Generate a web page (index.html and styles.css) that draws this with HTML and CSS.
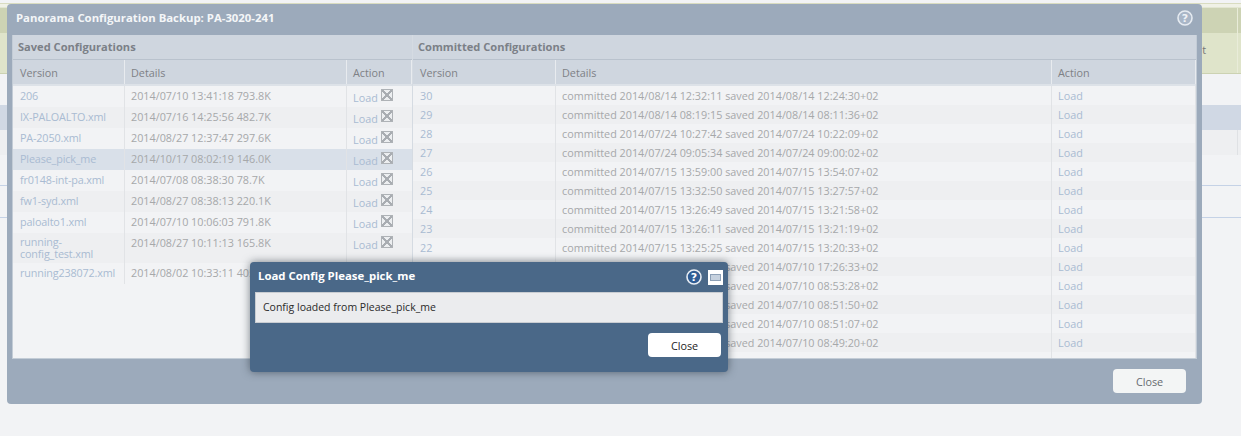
FILE: index.html
```html
<!DOCTYPE html>
<html lang="en">
<head>
<meta charset="utf-8">
<title>Panorama Configuration Backup</title>
<link rel="stylesheet" href="styles.css">
</head>
<body>
<div class="page">
  <div class="bg-top"></div>
  <div class="bg-head"><span class="bg-head-text">t</span></div>
  <div class="bg-gap"></div>
  <div class="bg-sel"></div>
  <div class="bg-alt"></div>
  <div class="bg-line1"></div>
  <div class="bg-line2"></div>
</div>

<section class="backup">
  <header class="backup-title">
    <h1>Panorama Configuration Backup: PA-3020-241</h1>
    <svg class="help" viewBox="0 0 16 16"><circle cx="8" cy="8" r="7" fill="#a9b6c7" stroke="#e6ebf1" stroke-width="1.6"/><text x="8" y="11.6" text-anchor="middle" class="help-q help-q-dim">?</text></svg>
  </header>
  <div class="panel">
    <div class="col saved">
      <div class="section">Saved Configurations</div>
      <div class="row head"><div class="c c1">Version</div><div class="c c2">Details</div><div class="c c3">Action</div></div>
      <div class="row"><div class="c c1 link">206</div><div class="c c2">2014/07/10 13:41:18 793.8K</div><div class="c c3"><span class="link load">Load</span><span class="x"></span></div></div>
      <div class="row alt"><div class="c c1 link">IX-PALOALTO.xml</div><div class="c c2">2014/07/16 14:25:56 482.7K</div><div class="c c3"><span class="link load">Load</span><span class="x"></span></div></div>
      <div class="row"><div class="c c1 link">PA-2050.xml</div><div class="c c2">2014/08/27 12:37:47 297.6K</div><div class="c c3"><span class="link load">Load</span><span class="x"></span></div></div>
      <div class="row picked"><div class="c c1 link">Please_pick_me</div><div class="c c2">2014/10/17 08:02:19 146.0K</div><div class="c c3"><span class="link load">Load</span><span class="x"></span></div></div>
      <div class="row"><div class="c c1 link">fr0148-int-pa.xml</div><div class="c c2">2014/07/08 08:38:30 78.7K</div><div class="c c3"><span class="link load">Load</span><span class="x"></span></div></div>
      <div class="row alt"><div class="c c1 link">fw1-syd.xml</div><div class="c c2">2014/08/27 08:38:13 220.1K</div><div class="c c3"><span class="link load">Load</span><span class="x"></span></div></div>
      <div class="row"><div class="c c1 link">paloalto1.xml</div><div class="c c2">2014/07/10 10:06:03 791.8K</div><div class="c c3"><span class="link load">Load</span><span class="x"></span></div></div>
      <div class="row alt tall"><div class="c c1 link">running-<br>config_test.xml</div><div class="c c2">2014/08/27 10:11:13 165.8K</div><div class="c c3"><span class="link load">Load</span><span class="x"></span></div></div>
      <div class="row"><div class="c c1 link">running238072.xml</div><div class="c c2">2014/08/02 10:33:11 405.2K</div><div class="c c3"><span class="link load">Load</span><span class="x"></span></div></div>
    </div>
    <div class="col committed">
      <div class="section">Committed Configurations</div>
      <div class="row head"><div class="c d1">Version</div><div class="c d2">Details</div><div class="c d3">Action</div></div>
      <div class="row r"><div class="c d1 link">30</div><div class="c d2">committed 2014/08/14 12:32:11 saved 2014/08/14 12:24:30+02</div><div class="c d3 link">Load</div></div>
      <div class="row r alt"><div class="c d1 link">29</div><div class="c d2">committed 2014/08/14 08:19:15 saved 2014/08/14 08:11:36+02</div><div class="c d3 link">Load</div></div>
      <div class="row r"><div class="c d1 link">28</div><div class="c d2">committed 2014/07/24 10:27:42 saved 2014/07/24 10:22:09+02</div><div class="c d3 link">Load</div></div>
      <div class="row r alt"><div class="c d1 link">27</div><div class="c d2">committed 2014/07/24 09:05:34 saved 2014/07/24 09:00:02+02</div><div class="c d3 link">Load</div></div>
      <div class="row r"><div class="c d1 link">26</div><div class="c d2">committed 2014/07/15 13:59:00 saved 2014/07/15 13:54:07+02</div><div class="c d3 link">Load</div></div>
      <div class="row r alt"><div class="c d1 link">25</div><div class="c d2">committed 2014/07/15 13:32:50 saved 2014/07/15 13:27:57+02</div><div class="c d3 link">Load</div></div>
      <div class="row r"><div class="c d1 link">24</div><div class="c d2">committed 2014/07/15 13:26:49 saved 2014/07/15 13:21:58+02</div><div class="c d3 link">Load</div></div>
      <div class="row r alt"><div class="c d1 link">23</div><div class="c d2">committed 2014/07/15 13:26:11 saved 2014/07/15 13:21:19+02</div><div class="c d3 link">Load</div></div>
      <div class="row r"><div class="c d1 link">22</div><div class="c d2">committed 2014/07/15 13:25:25 saved 2014/07/15 13:20:33+02</div><div class="c d3 link">Load</div></div>
      <div class="row r alt"><div class="c d1 link">21</div><div class="c d2">committed 2014/07/10 17:31:20 saved 2014/07/10 17:26:33+02</div><div class="c d3 link">Load</div></div>
      <div class="row r"><div class="c d1 link">20</div><div class="c d2">committed 2014/07/10 08:58:11 saved 2014/07/10 08:53:28+02</div><div class="c d3 link">Load</div></div>
      <div class="row r alt"><div class="c d1 link">19</div><div class="c d2">committed 2014/07/10 08:56:34 saved 2014/07/10 08:51:50+02</div><div class="c d3 link">Load</div></div>
      <div class="row r"><div class="c d1 link">18</div><div class="c d2">committed 2014/07/10 08:55:52 saved 2014/07/10 08:51:07+02</div><div class="c d3 link">Load</div></div>
      <div class="row r alt"><div class="c d1 link">17</div><div class="c d2">committed 2014/07/10 08:54:03 saved 2014/07/10 08:49:20+02</div><div class="c d3 link">Load</div></div>
      <div class="row r"><div class="c d1 link">16</div><div class="c d2">committed 2014/07/10 08:50:41 saved 2014/07/10 08:45:58+02</div><div class="c d3 link">Load</div></div>
    </div>
  </div>
  <footer class="backup-foot"><button class="btn btn-dim">Close</button></footer>
</section>

<section class="dialog">
  <header class="dialog-title">
    <h2>Load Config Please_pick_me</h2>
    <svg class="help" viewBox="0 0 16 16"><circle cx="8" cy="8" r="7" fill="#2f5c94" stroke="#e8edf3" stroke-width="1.6"/><text x="8" y="11.6" text-anchor="middle" class="help-q">?</text></svg>
    <span class="minimize"></span>
  </header>
  <div class="message">Config loaded from Please_pick_me</div>
  <footer class="dialog-foot"><button class="btn">Close</button></footer>
</section>
</body>
</html>
```

FILE: styles.css
```css
* { box-sizing: border-box; }
html, body { margin: 0; padding: 0; }
body {
  width: 1241px;
  height: 436px;
  overflow: hidden;
  background: #f2f3f5;
  font-family: "Open Sans", "DejaVu Sans", sans-serif;
  font-size: 10.8px;
  position: relative;
}
.page { height: 436px; }
.bg-top { height: 8px; background: #f0f1e6; border-top: 3px solid #f2f3f5; border-bottom: 1px solid #e3e6d2; box-shadow: inset 0 1px 0 #d9dcc0; }
.bg-head {
  height: 66px;
  background:
    linear-gradient(#e9ecd9, #e9ecd9) 1237px 0 / 1px 100% no-repeat,
    linear-gradient(#cdd3b4 0, #cdd3b4 25px, #dfe4ca 25px);
  border-bottom: 1px solid #ccd2b2;
  text-align: right;
  padding: 34px 1px 0 0;
  color: #777;
}
.bg-head-text { margin-right: 34px; }
.bg-gap { height: 31px; }
.bg-sel { height: 25px; background: #d0d8e4; }
.bg-alt { height: 25px; background: linear-gradient(#dfe1e4, #dfe1e4) 1237px 0 / 1px 100% no-repeat, #eeeff1; }
.bg-line1 { height: 1px; margin-top: 30px; background: #c5d2e6; }
.bg-line2 { height: 1px; margin-top: 31px; background: #c5d2e6; }

.backup {
  position: absolute;
  left: 7px;
  top: 4px;
  width: 1195px;
  height: 400px;
  background: #9caabb;
  border-radius: 4px;
  display: flex;
  flex-direction: column;
}
.backup-title {
  height: 31px;
  flex: none;
  display: flex;
  align-items: center;
  justify-content: space-between;
  padding: 0 9px 3px 9px;
}
.backup-title h1 {
  margin: 0 0 2px;
  color: #f4f6f8;
  font-size: 11.35px;
  font-weight: 700;
}
.help { width: 16px; height: 16px; flex: none; display: block; }
.help-q { font: 700 11px "DejaVu Sans", sans-serif; fill: #fff; }
.help-q-dim { fill: #eef1f5; }

.panel {
  flex: none;
  margin-left: 5px;
  width: 1185px;
  height: 324px;
  background: #f2f3f5;
  border: 1px solid #c3ccd6;
  border-top: 0;
  display: flex;
  overflow: hidden;
}
.col { display: flex; flex-direction: column; }
.saved { width: 400px; flex: none; border-right: 1px solid #d5dbe2; }
.committed { flex: 1; min-width: 0; }
.section {
  height: 25px;
  flex: none;
  background: #cfd6df;
  border-bottom: 1px solid #b9c2cd;
  color: #7b8087;
  font-weight: 700;
  font-size: 11.1px;
  line-height: 23px;
  padding-left: 5px;
}
.row { display: flex; height: 21px; flex: none; color: #a6a8aa; }
.row.r { height: 19px; }
.row.alt { background: #eeeff1; }
.row.picked { background: #d9e0e9; }
.row.tall { height: 30px; }
.row.head {
  height: 26px;
  background: #cfd6df;
  border-bottom: 2px solid #dde2e8;
  color: #7e8186;
}
.c { padding: 3px 0 0 6px; line-height: 14px; border-right: 1px solid #e1e3e6; flex: none; }
.row.r .c { padding-top: 3px; }
.row.head .c { padding-top: 6px; border-right: 1px solid #e8ebef; }
.c1 { width: 112px; padding-left: 7px; letter-spacing: -.15px; }
.row.head .c1, .row.head .d1 { letter-spacing: 0; padding-left: 7px; }
.row.tall .c1 { line-height: 11.5px; }
.c2 { width: 222px; }
.c3 { width: 65px; border-right: 0; display: flex; align-items: flex-start; white-space: nowrap; }
.d1 { width: 143px; padding-left: 7px; }
.d2 { width: 496px; }
.d3 { flex: 1; }
.link { color: #a9bbd2; }
.row.head .link { color: inherit; }
.load { margin-top: 2px; }
.x {
  width: 12px;
  height: 12px;
  margin-left: 3px;
  flex: none;
  border: 1px solid #aeb2b6;
  background:
    linear-gradient(45deg, transparent 42%, #a9adb2 42%, #a9adb2 58%, transparent 58%),
    linear-gradient(-45deg, transparent 42%, #a9adb2 42%, #a9adb2 58%, transparent 58%),
    #eceef0;
}

.backup-foot {
  flex: 1;
  display: flex;
  justify-content: flex-end;
  align-items: flex-start;
  padding: 10px 16px 0 0;
}
.btn {
  width: 73px;
  height: 24px;
  border: 0;
  border-radius: 4px;
  background: #fff;
  color: #1c1c1c;
  font: 10.8px "Open Sans", "DejaVu Sans", sans-serif;
  padding: 0;
}
.btn-dim { background: #f3f5f5; color: #666b70; }

.dialog {
  position: absolute;
  left: 250px;
  top: 262px;
  width: 478px;
  height: 110px;
  background: #4a6888;
  border-radius: 4px;
  box-shadow: 0 0 9px rgba(40, 50, 60, .6);
  padding: 0 5px;
}
.dialog-title {
  height: 30px;
  display: flex;
  align-items: center;
  padding: 0 0 0 3px;
}
.dialog-title h2 {
  margin: 0 auto 3px 0;
  color: #fff;
  font-size: 11.4px;
  font-weight: 700;
}
.minimize {
  width: 15px;
  height: 15px;
  margin-left: 6px;
  background: #fff;
  padding: 4px 2px;
  display: flex;
}
.minimize::before {
  content: "";
  flex: 1;
  background: #c6d1de;
  border: 1px solid #8da0b6;
}
.message {
  height: 31px;
  background: #ebecee;
  border: 1px solid #c9cdd2;
  color: #2a2a2a;
  font-size: 10.5px;
  line-height: 28px;
  padding-left: 7px;
}
.dialog-foot {
  display: flex;
  justify-content: flex-end;
  padding: 10px 2px 0 0;
}
```
